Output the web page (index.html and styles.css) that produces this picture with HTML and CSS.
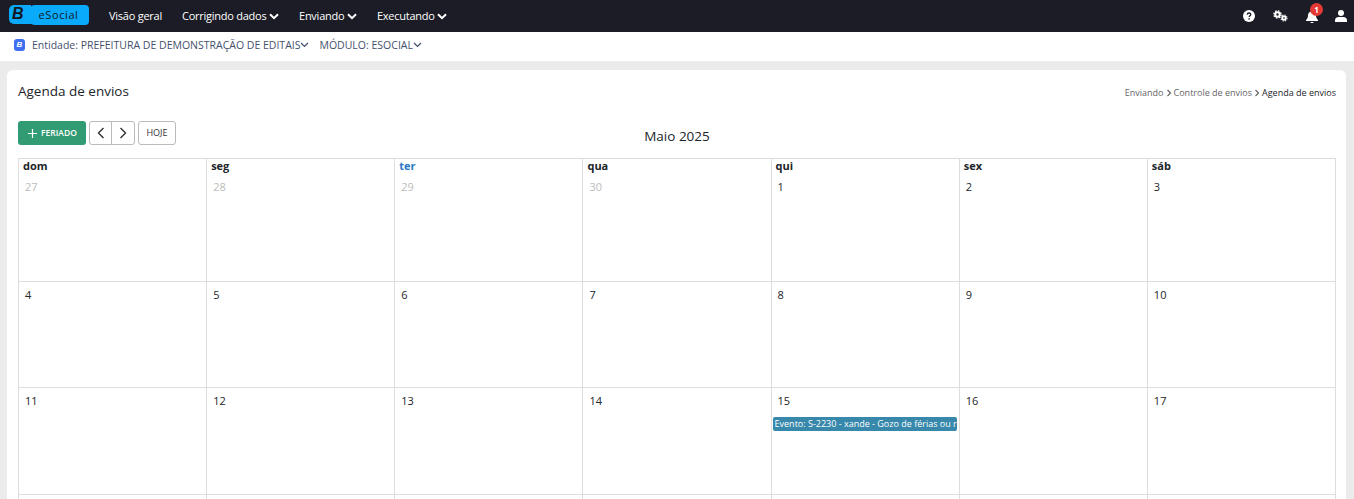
FILE: index.html
```html
<!DOCTYPE html>
<html lang="pt-BR">
<head>
<meta charset="utf-8">
<title>Agenda de envios</title>
<link rel="stylesheet" href="styles.css">
</head>
<body>
<header class="topbar">
  <div class="brand"><span class="brand-b">B</span><span class="brand-name">eSocial</span></div>
  <nav class="menu">
    <a class="menu-item">Visão geral</a>
    <a class="menu-item">Corrigindo dados <svg class="caret" viewBox="0 0 10 7"><path d="M1 1.2l4 4 4-4"/></svg></a>
    <a class="menu-item">Enviando <svg class="caret" viewBox="0 0 10 7"><path d="M1 1.2l4 4 4-4"/></svg></a>
    <a class="menu-item">Executando <svg class="caret" viewBox="0 0 10 7"><path d="M1 1.2l4 4 4-4"/></svg></a>
  </nav>
  <div class="tools">
    <svg class="tool tool-help" viewBox="0 0 12 12"><circle cx="6" cy="6" r="6" fill="#fff"/><path d="M4.2 4.6C4.3 3.5 5 3 6 3s1.800.6 1.800 1.500c0 1.300-1.600 1.200-1.600 2.500" fill="none" stroke="#1b1c26" stroke-width="1.300"/><circle cx="6.100" cy="8.900" r=".8" fill="#1b1c26"/></svg>
    <svg class="tool tool-gears" viewBox="0 0 15 12"><g fill="none" stroke="#fff"><circle cx="4.500" cy="4.500" r="2.200" stroke-width="2"/><circle cx="4.500" cy="4.500" r="3.600" stroke-width="1.400" stroke-dasharray="1.500 1.330"/><circle cx="11" cy="8" r="1.700" stroke-width="1.700"/><circle cx="11" cy="8" r="3" stroke-width="1.200" stroke-dasharray="1.300 1.060"/></g></svg>
    <div class="bell">
      <svg class="tool tool-bell" viewBox="0 0 12 13"><path d="M6 0a1 1 0 0 1 1 1v.5c2 .4 3 2 3 4 0 2.500 1 3.500 2 4.500v1H0v-1c1-1 2-2 2-4.500 0-2 1-3.600 3-4V1a1 1 0 0 1 1-1zM4.500 12h3a1.500 1.500 0 0 1-3 0z" fill="#fff"/></svg>
      <span class="badge">1</span>
    </div>
    <svg class="tool tool-user" viewBox="0 0 12 12"><circle cx="6" cy="3" r="3" fill="#fff"/><path d="M0 12v-1.500C0 8.500 1.500 7 3.500 7h5C10.500 7 12 8.500 12 10.500V12z" fill="#fff"/></svg>
  </div>
</header>

<div class="subbar">
  <span class="sub-logo">B</span>
  <span class="sub-item">Entidade: PREFEITURA DE DEMONSTRAÇÃO DE EDITAIS<svg class="sub-caret" viewBox="0 0 10 7"><path d="M1 1.200l4 4 4-4"/></svg></span>
  <span class="sub-item sub-module">MÓDULO: ESOCIAL<svg class="sub-caret" viewBox="0 0 10 7"><path d="M1 1.200l4 4 4-4"/></svg></span>
</div>

<main class="card">
  <div class="head">
    <h1 class="title">Agenda de envios</h1>
    <div class="crumbs">
      <span>Enviando</span><svg class="crumb-sep" viewBox="0 0 6 8"><path d="M1.500 1l3 3-3 3"/></svg><span>Controle de envios</span><svg class="crumb-sep" viewBox="0 0 6 8"><path d="M1.500 1l3 3-3 3"/></svg><span class="crumb-current">Agenda de envios</span>
    </div>
  </div>

  <div class="toolbar">
    <div class="actions">
      <button class="btn-add"><svg class="plus" viewBox="0 0 9 9"><path d="M4.500 0v9M0 4.500h9"/></svg>FERIADO</button>
      <div class="pager">
        <button class="page-btn"><svg class="chev" viewBox="0 0 8 12"><path d="M6.500 1l-5 5 5 5"/></svg></button>
        <button class="page-btn"><svg class="chev" viewBox="0 0 8 12"><path d="M1.500 1l5 5-5 5"/></svg></button>
      </div>
      <button class="btn-today">HOJE</button>
    </div>
    <h2 class="month">Maio 2025</h2>
  </div>

  <div class="calendar">
    <div class="cell first">
      <div class="dow">dom</div><div class="num muted">27</div>
    </div>
    <div class="cell first"><div class="dow">seg</div><div class="num muted">28</div></div>
    <div class="cell first"><div class="dow today">ter</div><div class="num muted">29</div></div>
    <div class="cell first"><div class="dow">qua</div><div class="num muted">30</div></div>
    <div class="cell first"><div class="dow">qui</div><div class="num">1</div></div>
    <div class="cell first"><div class="dow">sex</div><div class="num">2</div></div>
    <div class="cell first"><div class="dow">sáb</div><div class="num">3</div></div>

    <div class="cell"><div class="num">4</div></div>
    <div class="cell"><div class="num">5</div></div>
    <div class="cell"><div class="num">6</div></div>
    <div class="cell"><div class="num">7</div></div>
    <div class="cell"><div class="num">8</div></div>
    <div class="cell"><div class="num">9</div></div>
    <div class="cell"><div class="num">10</div></div>

    <div class="cell"><div class="num">11</div></div>
    <div class="cell"><div class="num">12</div></div>
    <div class="cell"><div class="num">13</div></div>
    <div class="cell"><div class="num">14</div></div>
    <div class="cell"><div class="num">15</div><div class="event">Evento: S-2230 - xande - Gozo de férias ou r</div></div>
    <div class="cell"><div class="num">16</div></div>
    <div class="cell"><div class="num">17</div></div>

    <div class="cell"></div>
    <div class="cell"></div>
    <div class="cell"></div>
    <div class="cell"></div>
    <div class="cell"></div>
    <div class="cell"></div>
    <div class="cell"></div>
  </div>
</main>
</body>
</html>
```
FILE: styles.css
```css
* { box-sizing: border-box; }
html, body { height: 100%; }
body {
  margin: 0;
  background: #ebebeb;
  font-family: "Open Sans", "Liberation Sans", sans-serif;
  color: #212529;
  overflow: hidden;
}

.topbar {
  height: 32px;
  background: #1b1c26;
  display: flex;
  align-items: center;
  padding: 0 7px 0 9px;
}
.brand {
  width: 80px;
  height: 20px;
  margin-bottom: 2px;
  display: flex;
}
.brand-b {
  width: 22px;
  height: 19px;
  padding-left: 3px;
  border-radius: 5px 0 0 5px;
  background: #09a9fb;
  font: italic 700 16px/18px "Liberation Sans", sans-serif;
  color: #14161f;
}
.brand-name {
  flex: 1;
  margin-left: -3px;
  border-radius: 7px 4px 4px 7px;
  background: #09a9fb;
  text-align: center;
  font-size: 11px;
  font-weight: 500;
  line-height: 20px;
  letter-spacing: .6px;
  color: #101c28;
}
.menu { display: flex; margin-left: 20px; gap: 20px; }
.menu-item {
  display: flex;
  align-items: center;
  color: #fff;
  font-size: 11px;
  font-weight: 500;
  line-height: 16px;
  white-space: pre;
  letter-spacing: -.25px;
}
.caret { width: 10px; height: 7px; margin-left: 0; fill: none; stroke: #fff; stroke-width: 2; }
.tools { margin-left: auto; display: flex; align-items: center; }
.tool { display: block; }
.tool-help { width: 12px; height: 12px; margin-right: 18px; }
.tool-gears { width: 15px; height: 12px; margin-right: 18px; }
.bell { position: relative; width: 12px; height: 13px; margin-right: 17px; }
.tool-bell { width: 12px; height: 13px; }
.badge {
  position: absolute;
  top: -7px;
  left: 4px;
  width: 13px;
  height: 13px;
  border-radius: 50%;
  background: #e53935;
  color: #fff;
  font-size: 8px;
  font-weight: 700;
  line-height: 13px;
  text-align: center;
}
.tool-user { width: 12px; height: 12px; }

.subbar {
  height: 29px;
  background: #fff;
  display: flex;
  align-items: center;
  padding: 0 0 3px 14px;
  font-size: 10.500px;
  line-height: 16px;
  color: #44506e;
  white-space: nowrap;
}
.sub-logo {
  width: 11px;
  height: 12px;
  margin-right: 7px;
  border-radius: 3px;
  background: #3f6ef0;
  color: #fff;
  font: italic 700 8px/12px "Liberation Sans", sans-serif;
  text-align: center;
}
.sub-item { display: flex; align-items: center; }
.sub-module { margin-left: 10px; }
.sub-caret { width: 9px; height: 6px; fill: none; stroke: #44506e; stroke-width: 1.500; }

.card {
  margin: 9px 8px 0 7px;
  padding: 0 10px 0 11px;
  background: #fff;
  border-radius: 6px 6px 0 0;
  height: 600px;
}
.head { display: flex; justify-content: space-between; align-items: flex-start; padding-top: 11px; height: 51px; }
.title { margin: 0; font-size: 13.500px; font-weight: 400; line-height: 20px; color: #212529; }
.crumbs { display: flex; align-items: center; margin-top: 5px; font-size: 9px; line-height: 14px; color: #666; white-space: nowrap; }
.crumb-sep { width: 6px; height: 8px; margin: 0 2px; fill: none; stroke: #666; stroke-width: 1.200; }
.crumb-current { color: #212529; }

.toolbar { position: relative; height: 37px; }
.actions { display: flex; gap: 3px; align-items: flex-start; }
.btn-add {
  width: 68px;
  height: 24px;
  border: 0;
  border-radius: 3px;
  background: #319b73;
  color: #fff;
  font: 600 8.500px/24px "Open Sans", sans-serif;
  padding: 0 0 0 1px;
  display: flex;
  align-items: center;
  justify-content: center;
}
.plus { width: 9px; height: 9px; margin-right: 4px; fill: none; stroke: #fff; stroke-width: 1.200; }
.pager { display: flex; }
.page-btn {
  width: 23px;
  height: 24px;
  padding: 0;
  background: #fff;
  border: 1px solid #bbb;
  display: flex;
  align-items: center;
  justify-content: center;
}
.page-btn:first-child { border-radius: 3px 0 0 3px; }
.page-btn:last-child { width: 24px; border-radius: 0 3px 3px 0; margin-left: -1px; }
.chev { width: 8px; height: 12px; fill: none; stroke: #333; stroke-width: 1.400; }
.btn-today {
  width: 38px;
  height: 24px;
  padding: 0;
  background: #fff;
  border: 1px solid #bbb;
  border-radius: 3px;
  color: #333;
  font: 400 9px/22px "Open Sans", sans-serif;
}
.month {
  position: absolute;
  left: 0;
  right: 0;
  top: 5px;
  margin: 0;
  text-align: center;
  font-size: 13.500px;
  font-weight: 400;
  line-height: 20px;
  color: #212529;
}

.calendar {
  display: grid;
  grid-template-columns: repeat(7, 1fr);
  grid-template-rows: 123px 106px 107px 106px;
  width: 1318px;
  border-top: 1px solid #ddd;
  border-right: 1px solid #ddd;
}
.cell { border-left: 1px solid #ddd; border-bottom: 1px solid #ddd; min-width: 0; }
.dow { padding-left: 4px; font-size: 11px; font-weight: 700; line-height: 13px; color: #212529; }
.dow.today { color: #2a78c6; }
.num { padding: 5px 0 0 6px; font-size: 11px; line-height: 15px; color: #212529; }
.first .num { padding-top: 7px; }
.num.muted { color: #bbb; }
.event {
  margin: 9px 2px 0 1px;
  height: 14px;
  padding: 0 2px;
  border-radius: 2px;
  background: #3788ab;
  color: #fff;
  font-size: 9px;
  font-weight: 400;
  line-height: 14px;
  white-space: nowrap;
  overflow: hidden;
}
```
